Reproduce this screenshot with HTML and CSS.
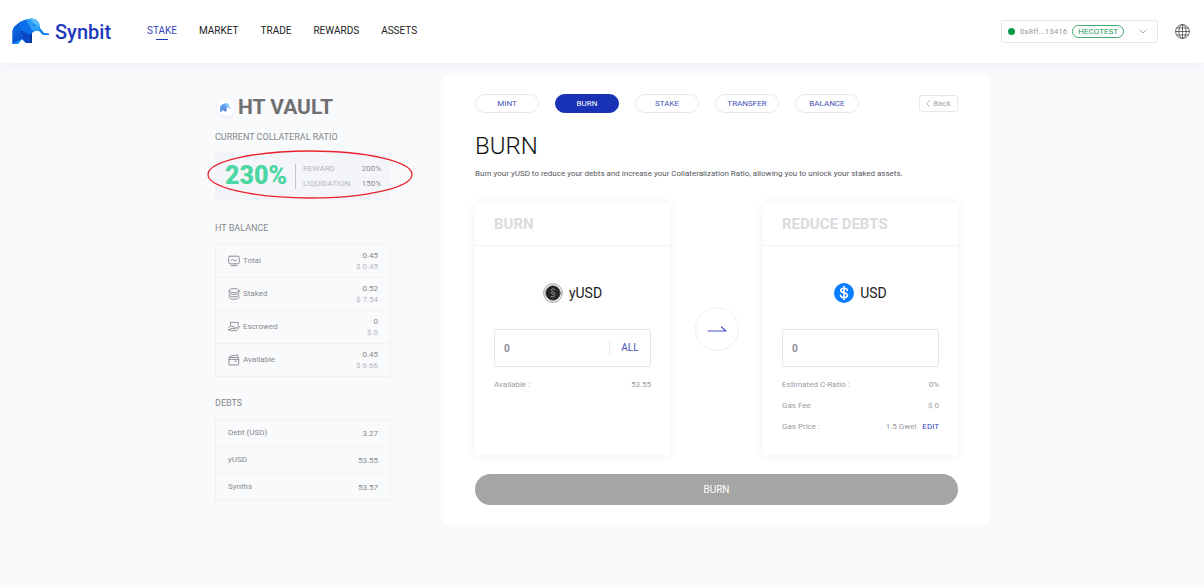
FILE: index.html
```html
<!DOCTYPE html>
<html lang="en">
<head>
<meta charset="utf-8">
<meta name="viewport" content="width=device-width, initial-scale=1">
<title>Synbit</title>
<link rel="stylesheet" href="styles.css">
</head>
<body>
<svg class="defs" aria-hidden="true">
  <symbol id="elephant" viewBox="0 0 38 27">
    <path fill="#0b7df0" d="M.5 26V13L2 9L8 4L14 1.500L20 .5L24.500 2L27 5L28 10L32 15L37 15.500V17L31 17L27 13L23 13L20 15V25H14L10 21L6 26Z"/>
    <path fill="#0a63dc" d="M8 4L2 9L.5 13V21L9 12Z"/>
    <path fill="#0c70ea" d="M8 4L9 12L18 17L21 11L14 1.500Z"/>
    <path fill="#0a47c4" d="M9 12L10 21L14 25H19.500L20 15L18 17Z"/>
    <path fill="#08369f" d="M18 17L20 15V25H18Z"/>
    <path fill="#0a55d2" d="M9 12L.5 21V26L10 21Z"/>
    <path fill="#1290f7" d="M.5 26L10 21L6 26Z"/>
    <path fill="#2c9ef8" d="M14 1.500L20 .5L24.500 2L27 5L28 10L27 13H23L20 12Z"/>
    <path fill="#5fbdfd" d="M18 .8L20 .5L24.500 2L27 5L28 9L22 5Z"/>
    <circle cx="22" cy="7" r=".7" fill="#0a55d2"/>
  </symbol>
</svg>

<header class="topbar">
  <a class="brand" href="#"><svg class="brand-mark"><use href="#elephant"/></svg><span>Synbit</span></a>
  <nav class="nav">
    <a class="active" href="#">STAKE</a>
    <a href="#">MARKET</a>
    <a href="#">TRADE</a>
    <a href="#">REWARDS</a>
    <a href="#">ASSETS</a>
  </nav>
  <button class="wallet" type="button">
    <span class="dot"></span><span>0x8ff...13416</span><span class="network">HECOTEST</span>
    <svg class="chevron" viewBox="0 0 8 5"><path d="M1 1l3 3 3-3"/></svg>
  </button>
  <button class="lang" type="button" aria-label="Language">
    <svg viewBox="0 0 16 16"><circle cx="8" cy="8" r="6.500"/><ellipse cx="8" cy="8" rx="3.400" ry="6.500"/><path d="M8 1.500v13M1.500 8h13M2.500 4.700h11M2.500 11.300h11"/></svg>
  </button>
</header>

<main class="layout">
  <aside class="sidebar">
    <h1 class="vault"><span class="vault-icon"><svg><use href="#elephant"/></svg></span>HT VAULT</h1>

    <h2 class="label">CURRENT COLLATERAL RATIO</h2>
    <div class="ratio">
      <strong>230%</strong>
      <dl>
        <div><dt>REWARD</dt><dd>200%</dd></div>
        <div><dt>LIQUIDATION</dt><dd>150%</dd></div>
      </dl>
      <svg class="highlight" viewBox="0 0 206 49" aria-hidden="true"><ellipse cx="103" cy="24.500" rx="102" ry="23.500"/></svg>
    </div>

    <h2 class="label">HT BALANCE</h2>
    <table class="list balances">
      <tr><th scope="row"><span class="row-name"><svg viewBox="0 0 12 12"><rect x=".7" y="1.200" width="10.600" height="7.600" rx="1.200"/><path d="M3 5.500l1.500-1.200 2.500 1.600L9 5M3 10.600h6"/></svg>Total</span></th><td>0.45<small>$ 0.45</small></td></tr>
      <tr><th scope="row"><span class="row-name"><svg viewBox="0 0 12 12"><ellipse cx="6" cy="2.600" rx="4.900" ry="2"/><path d="M1.100 2.600v1.900c0 1.100 2.200 2 4.900 2s4.900-.9 4.900-2V2.600M1.100 6.200v.6c0 1.100 2.200 2 4.900 2s4.900-.9 4.900-2v-.6M1.100 8.700v.6c0 1.100 2.200 2 4.900 2s4.900-.9 4.900-2v-.6"/></svg>Staked</span></th><td>0.52<small>$ 7.54</small></td></tr>
      <tr><th scope="row"><span class="row-name"><svg viewBox="0 0 12 12"><path d="M2.500 4.500V1.300h7.700v2.500"/><path d="M.6 6.800C1.500 5 3.500 4.600 5 5.600L7 6.500M4.500 7.500l2.500.3 3.800-2.800c.8.200.7 1 .2 1.600L8.500 9.700H3.500L.6 8.800z"/></svg>Escrowed</span></th><td>0<small>$ 0</small></td></tr>
      <tr><th scope="row"><span class="row-name"><svg viewBox="0 0 12 12"><rect x="1" y="3.500" width="9.700" height="7.500" rx=".8"/><path d="M1.200 3.500L2.500 2l7-1 .5 2.500M1 5.400h9.700M7 7.200h1.500"/></svg>Available</span></th><td>0.45<small>$ 6.66</small></td></tr>
    </table>

    <h2 class="label">DEBTS</h2>
    <table class="list debts">
      <tr><th scope="row">Debt (USD)</th><td>3.27</td></tr>
      <tr><th scope="row">yUSD</th><td>53.55</td></tr>
      <tr><th scope="row">Synths</th><td>53.57</td></tr>
    </table>
  </aside>

  <section class="panel">
    <div class="panel-top">
      <nav class="tabs">
        <button type="button">MINT</button>
        <button type="button" class="active">BURN</button>
        <button type="button">STAKE</button>
        <button type="button">TRANSFER</button>
        <button type="button">BALANCE</button>
      </nav>
      <button class="back" type="button"><svg viewBox="0 0 4 7"><path d="M3.500.5l-3 3 3 3"/></svg>Back</button>
    </div>
    <h2 class="title">BURN</h2>
    <p class="intro">Burn your yUSD to reduce your debts and increase your Collateralization Ratio, allowing you to unlock your staked assets.</p>

    <div class="exchange">
      <article class="card">
        <h3>BURN</h3>
        <div class="card-body">
          <div class="token">
            <svg viewBox="0 0 20 20"><circle cx="10" cy="10" r="9.300" fill="#fff" stroke="#999" stroke-width="1"/><circle cx="10" cy="10" r="7.300" fill="#262628" stroke="#555" stroke-width=".8"/><path d="M12 6.500c-1-1-4-.8-3.700 1 .3 1.500 3.600 1.300 3.700 3M8 9.500c0 1.700 3.600 1.600 3.800 3 .2 1.500-2.800 1.900-3.800.8" fill="none" stroke="#99999d" stroke-width="1"/></svg>
            <label for="burn-amount">yUSD</label>
          </div>
          <div class="field"><input id="burn-amount" type="text" value="0"><button type="button">ALL</button></div>
          <dl class="facts"><div><dt>Available :</dt><dd>53.55</dd></div></dl>
        </div>
      </article>

      <div class="arrow"><svg viewBox="0 0 20 8"><path d="M1 6h18L14.500 2"/></svg></div>

      <article class="card">
        <h3>REDUCE DEBTS</h3>
        <div class="card-body">
          <div class="token">
            <svg viewBox="0 0 20 20"><circle cx="10" cy="10" r="10" fill="#0a7dff"/><path d="M13.300 7.300C13 6 11.700 5.300 10 5.300c-2 0-3.200.9-3.200 2.200 0 3.200 6.600 1.400 6.600 4.800 0 1.400-1.400 2.300-3.400 2.300s-3.300-.9-3.500-2.300M10 3.500v13" fill="none" stroke="#fff" stroke-width="1.600"/></svg>
            <label for="debt-amount">USD</label>
          </div>
          <div class="field"><input id="debt-amount" type="text" value="0"></div>
          <dl class="facts">
            <div><dt>Estimated C-Ratio :</dt><dd>0%</dd></div>
            <div><dt>Gas Fee</dt><dd>$ 0</dd></div>
            <div><dt>Gas Price :</dt><dd>1.5 Gwei <a href="#">EDIT</a></dd></div>
          </dl>
        </div>
      </article>
    </div>
    <button class="submit" type="button">BURN</button>
  </section>
</main>
</body>
</html>
```
FILE: styles.css
```css
* { box-sizing: border-box; }

body {
  margin: 0;
  min-height: 100vh;
  background: #f9fafc;
  color: #222;
  font: 8px/12px Roboto, "Liberation Sans", sans-serif;
}

h1, h2, h3, p, dl, dd { margin: 0; }
a { color: inherit; text-decoration: none; }
button, input { font: inherit; color: inherit; background: none; border: 0; padding: 0; margin: 0; }
button { cursor: pointer; }
svg { display: block; fill: none; stroke-linecap: round; stroke-linejoin: round; }
.defs { position: absolute; width: 0; height: 0; }

/* Header */
.topbar {
  display: flex;
  align-items: center;
  height: 63px;
  padding: 0 13px 0 12px;
  background: #fff;
  box-shadow: 0 2px 12px #eef0f7;
}
.brand {
  display: flex;
  align-items: center;
  gap: 5px;
  width: 135px;
  color: #1c39bb;
  font-size: 20px;
  line-height: 24px;
  font-weight: 500;
}
.brand-mark { width: 38px; height: 27px; }
.nav { display: flex; flex: 1; gap: 22px; font-size: 10px; line-height: 16px; }
.nav a { display: flex; flex-direction: column; align-items: center; }
.nav a::after { content: ""; width: 12px; height: 1px; }
.nav .active { color: #3547c0; }
.nav .active::after { background: #1c39bb; }
.wallet {
  display: flex;
  align-items: center;
  height: 23px;
  padding: 0 10px 0 6px;
  gap: 5px;
  border: 1px solid #e7e7e9;
  border-radius: 3px;
  color: #98999d;
}
.dot { width: 7px; height: 7px; border-radius: 50%; background: #079944; }
.network {
  height: 13px;
  padding: 0 5px;
  border: 1px solid #3fa86c;
  border-radius: 7px;
  color: #279a59;
  line-height: 11px;
}
.chevron { width: 8px; height: 5px; margin-left: 10px; stroke: #aaabb0; }
.lang { margin-left: 16px; }
.lang svg { width: 17px; height: 17px; stroke: #555; stroke-width: .8; }

/* Page */
.layout {
  display: flex;
  align-items: flex-start;
  gap: 53px;
  max-width: 774px;
  margin: 0 auto;
  padding: 12px 0 32px;
}

/* Sidebar */
.sidebar { flex: 0 0 176px; padding-top: 20px; color: #87898e; }
.vault {
  display: flex;
  align-items: center;
  gap: 3px;
  padding-left: 2px;
  color: #707072;
  font-size: 21px;
  line-height: 24px;
  font-weight: 700;
}
.vault-icon {
  display: grid;
  place-items: center;
  width: 18px;
  height: 18px;
  border-radius: 50%;
  background: #fff;
  box-shadow: 0 1px 4px #e8ebf4;
}
.vault-icon svg { width: 12px; height: 9px; opacity: .65; }
.label { font-size: 9px; line-height: 12px; font-weight: 400; color: #858689; }
.vault + .label { margin-top: 12px; }
.ratio {
  position: relative;
  display: flex;
  align-items: center;
  justify-content: space-between;
  height: 50px;
  margin: 8px 0 21px;
  padding: 0 10px;
  background: #f4f5f8;
}
.ratio strong { color: #4bd6a2; font-size: 25px; line-height: 30px; font-weight: 900; }
.ratio dl { width: 86px; border-left: 1px solid #c2c4c9; padding-left: 7px; line-height: 10px; }
.ratio dl div { display: flex; justify-content: space-between; }
.ratio dl div + div { margin-top: 5px; }
.ratio dt { color: #b4b5bb; }
.ratio dd { color: #8d8e93; }
.highlight { position: absolute; left: -8px; top: -1px; width: 206px; height: 49px; stroke: #e8232e; stroke-width: 1.300; }

.list {
  width: 100%;
  margin: 10px 0 20px;
  border: 1px solid #f1f2f5;
  border-collapse: collapse;
}
.list th { padding: 0 0 0 12px; font-weight: 400; text-align: left; }
.list td { padding: 0 12px 0 0; text-align: right; line-height: 11px; }
.list tr + tr > * { border-top: 1px solid #f1f2f5; }
.balances tr { height: 33px; }
.debts tr { height: 27px; }
.list small { display: block; font-size: 8px; color: #b5b7c1; }
.row-name { display: flex; align-items: center; gap: 3px; }
.row-name svg { width: 12px; height: 12px; stroke: #85878c; stroke-width: .9; }

/* Panel */
.panel { flex: 1; min-width: 0; padding: 19px 31px; background: #fff; border-radius: 3px; }
.panel-top { display: flex; align-items: center; justify-content: space-between; }
.tabs { display: flex; gap: 16px; }
.tabs button {
  width: 64px;
  height: 19px;
  border: 1px solid #e8e8ec;
  border-radius: 10px;
  color: #4652b8;
}
.tabs .active { background: #1831b5; border-color: #1831b5; color: #fff; }
.back {
  display: flex;
  align-items: center;
  justify-content: center;
  gap: 3px;
  width: 39px;
  height: 17px;
  border: 1px solid #e7e7ea;
  border-radius: 3px;
  color: #a0a2a8;
}
.back svg { width: 4px; height: 7px; stroke: #a0a2a8; stroke-width: .8; }
.title { margin-top: 18px; color: #111; font-size: 24px; line-height: 30px; font-weight: 300; }
.intro { margin-top: 7px; color: #55575d; }
.exchange { display: flex; align-items: stretch; justify-content: space-between; margin-top: 23px; }
.card {
  flex: 0 1 195px;
  min-width: 0;
  min-height: 252px;
  background: #fff;
  border-radius: 3px;
  box-shadow: 0 0 12px #eeeff3;
}
.card h3 {
  padding: 13px 19px 12px;
  border-bottom: 1px solid #f1f1f4;
  color: #dadbde;
  font-size: 15px;
  line-height: 17px;
  font-weight: 700;
}
.card-body { padding: 35px 19px 17px; }
.token { display: flex; align-items: center; justify-content: center; gap: 6px; height: 24px; font-size: 14px; }
.token svg { width: 20px; height: 20px; }
.field {
  display: flex;
  align-items: center;
  height: 38px;
  margin-top: 24px;
  border: 1px solid #e6e6e9;
  border-radius: 3px;
}
.field input { flex: 1; width: 100%; min-width: 0; height: 36px; padding: 0 9px; color: #8c8f9c; font-size: 10px; font-weight: 700; }
.field button { flex: none; width: 41px; height: 16px; border-left: 1px solid #ededf0; color: #4652b8; font-size: 10px; }
.facts { margin-top: 12px; color: #999ca3; }
.facts div { display: flex; justify-content: space-between; }
.facts div + div { margin-top: 9px; }
.facts a { margin-left: 4px; color: #3547c0; }
.arrow {
  flex: none;
  align-self: center;
  display: grid;
  place-items: center;
  width: 44px;
  height: 44px;
  border: 1px solid #efeff2;
  border-radius: 50%;
}
.arrow svg { width: 20px; height: 8px; stroke: #4652c8; stroke-width: 1.200; }
.submit {
  width: 100%;
  height: 31px;
  margin-top: 19px;
  border-radius: 16px;
  background: #a5a5a5;
  color: #fff;
  font-size: 10px;
}
```
